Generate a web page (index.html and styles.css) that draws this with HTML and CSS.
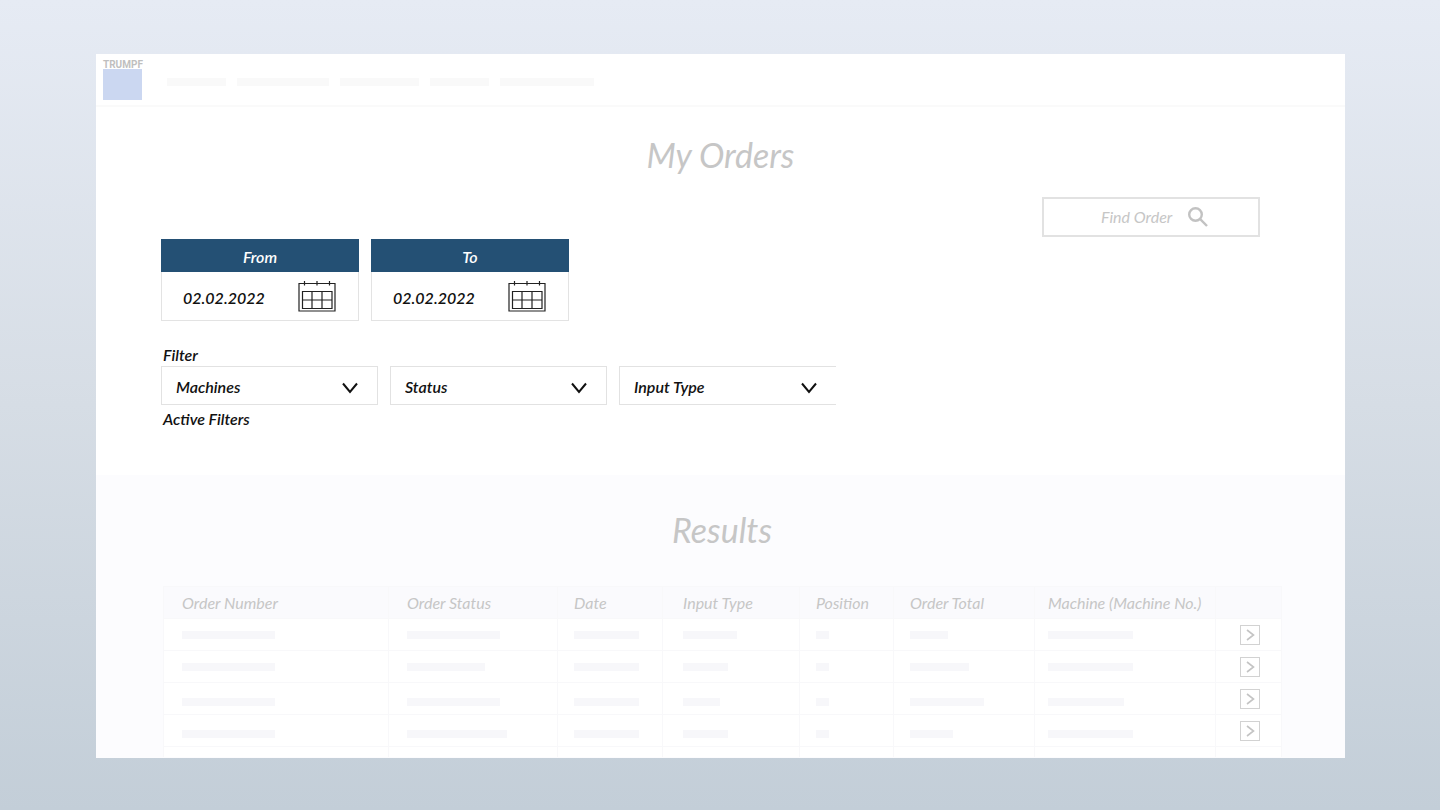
FILE: index.html
```html
<!DOCTYPE html>
<html lang="en">
<head>
<meta charset="utf-8">
<meta name="viewport" content="width=device-width, initial-scale=1">
<title>My Orders</title>
<link rel="stylesheet" href="styles.css">
</head>
<body>
<div class="panel">
  <header class="topbar">
    <div class="logo"><span class="logo-name">TRUMPF</span><span class="logo-square"></span></div>
    <nav class="nav" aria-label="Main">
      <span class="nav-item" style="width:59px"></span>
      <span class="nav-item" style="width:92px"></span>
      <span class="nav-item" style="width:79px"></span>
      <span class="nav-item" style="width:59px"></span>
      <span class="nav-item" style="width:94px"></span>
    </nav>
  </header>

  <main class="main">
    <section class="orders">
      <h1 class="title">My Orders</h1>
      <form class="search">
        <input class="search-input" type="text" placeholder="Find Order" aria-label="Find Order">
        <svg class="search-icon" viewBox="0 0 22 22" aria-hidden="true"><circle cx="8.5" cy="8.500" r="6.3"/><path d="M13.2 13.2L20 20"/></svg>
      </form>

      <div class="dates">
        <div class="date-card">
          <label class="date-label" for="from">From</label>
          <div class="date-body">
            <input class="date-input" id="from" type="text" value="02.02.2022">
            <svg class="calendar" viewBox="0 0 38 32" aria-hidden="true"><path d="M1 3.5H37V31H1ZM4.500 11.500H34V28.500H4.500ZM14 11.500V28.500M24 11.500V28.500M4.500 20H34M6.500 1V5.500M19 1V5.500M31.500 1V5.500"/></svg>
          </div>
        </div>
        <div class="date-card">
          <label class="date-label" for="to">To</label>
          <div class="date-body">
            <input class="date-input" id="to" type="text" value="02.02.2022">
            <svg class="calendar" viewBox="0 0 38 32" aria-hidden="true"><path d="M1 3.5H37V31H1ZM4.500 11.500H34V28.500H4.500ZM14 11.500V28.500M24 11.500V28.500M4.500 20H34M6.500 1V5.500M19 1V5.500M31.500 1V5.500"/></svg>
          </div>
        </div>
      </div>

      <h2 class="filter-heading">Filter</h2>
      <div class="filters">
        <div class="filter">
          <select class="filter-select" aria-label="Machines"><option>Machines</option></select>
          <svg class="chevron" viewBox="0 0 16 12" aria-hidden="true"><path d="M1 1.500L8 10L15 1.500"/></svg>
        </div>
        <div class="filter">
          <select class="filter-select" aria-label="Status"><option>Status</option></select>
          <svg class="chevron" viewBox="0 0 16 12" aria-hidden="true"><path d="M1 1.500L8 10L15 1.500"/></svg>
        </div>
        <div class="filter filter-open">
          <select class="filter-select" aria-label="Input Type"><option>Input Type</option></select>
          <svg class="chevron" viewBox="0 0 16 12" aria-hidden="true"><path d="M1 1.500L8 10L15 1.500"/></svg>
        </div>
      </div>
      <h2 class="filter-heading">Active Filters</h2>
    </section>

    <section class="results">
      <h2 class="title">Results</h2>
      <table class="table">
        <colgroup>
          <col class="c-number"><col class="c-status"><col class="c-date"><col class="c-type"><col class="c-position"><col class="c-total"><col class="c-machine"><col class="c-open">
        </colgroup>
        <thead>
          <tr><th>Order Number</th><th>Order Status</th><th>Date</th><th>Input Type</th><th>Position</th><th>Order Total</th><th>Machine (Machine No.)</th><th></th></tr>
        </thead>
        <tbody>
          <tr>
            <td><span class="bar" style="width:93px"></span></td><td><span class="bar" style="width:93px"></span></td><td><span class="bar" style="width:65px"></span></td><td><span class="bar" style="width:54px"></span></td><td><span class="bar" style="width:13px"></span></td><td><span class="bar" style="width:38px"></span></td><td><span class="bar" style="width:85px"></span></td>
            <td><button class="open" type="button" aria-label="Open order"><svg viewBox="0 0 18 18" aria-hidden="true"><path d="M6 4L12.500 9L6 14"/></svg></button></td>
          </tr>
          <tr>
            <td><span class="bar" style="width:93px"></span></td><td><span class="bar" style="width:78px"></span></td><td><span class="bar" style="width:65px"></span></td><td><span class="bar" style="width:45px"></span></td><td><span class="bar" style="width:13px"></span></td><td><span class="bar" style="width:59px"></span></td><td><span class="bar" style="width:85px"></span></td>
            <td><button class="open" type="button" aria-label="Open order"><svg viewBox="0 0 18 18" aria-hidden="true"><path d="M6 4L12.500 9L6 14"/></svg></button></td>
          </tr>
          <tr>
            <td><span class="bar" style="width:93px"></span></td><td><span class="bar" style="width:93px"></span></td><td><span class="bar" style="width:65px"></span></td><td><span class="bar" style="width:37px"></span></td><td><span class="bar" style="width:13px"></span></td><td><span class="bar" style="width:74px"></span></td><td><span class="bar" style="width:76px"></span></td>
            <td><button class="open" type="button" aria-label="Open order"><svg viewBox="0 0 18 18" aria-hidden="true"><path d="M6 4L12.500 9L6 14"/></svg></button></td>
          </tr>
          <tr>
            <td><span class="bar" style="width:93px"></span></td><td><span class="bar" style="width:100px"></span></td><td><span class="bar" style="width:65px"></span></td><td><span class="bar" style="width:45px"></span></td><td><span class="bar" style="width:13px"></span></td><td><span class="bar" style="width:43px"></span></td><td><span class="bar" style="width:85px"></span></td>
            <td><button class="open" type="button" aria-label="Open order"><svg viewBox="0 0 18 18" aria-hidden="true"><path d="M6 4L12.500 9L6 14"/></svg></button></td>
          </tr>
          <tr class="row-cut"><td></td><td></td><td></td><td></td><td></td><td></td><td></td><td></td></tr>
        </tbody>
      </table>
    </section>
  </main>
</div>
</body>
</html>
```

FILE: styles.css
```css
* { box-sizing: border-box; }

body {
  margin: 0;
  min-height: 100vh;
  padding: 54px 95px 52px 96px;
  display: flex;
  flex-direction: column;
  background: linear-gradient(#e6ebf4, #d6dde5 50%, #c3ced8);
  font-family: Lato, sans-serif;
  font-style: italic;
  font-size: 16px;
  line-height: 20px;
  color: #111;
}

input, select, button { font: inherit; color: inherit; }

.panel {
  flex: 1;
  display: flex;
  flex-direction: column;
  background: #fff;
}

.topbar {
  display: flex;
  align-items: flex-start;
  gap: 25px;
  height: 53px;
  padding: 6px 7px 0;
  border-bottom: 2px solid #fafafa;
}

.logo { display: flex; flex-direction: column; width: 39px; }

.logo-name {
  font: bold 10px/9px Roboto, sans-serif;
  color: #bfbfbf;
}

.logo-square { height: 31px; background: #cbd7f1; }

.nav { display: flex; gap: 11px; padding-top: 18px; }

.nav-item { height: 8px; background: #f9f9f9; }

.main { flex: 1; display: flex; flex-direction: column; }

.orders {
  display: flex;
  flex-direction: column;
  padding: 28px 65px 46px;
}

.title {
  margin: 0;
  text-align: center;
  font-size: 34px;
  line-height: 40px;
  font-weight: 400;
  color: #c6c6c6;
}

.search {
  align-self: flex-end;
  display: flex;
  align-items: center;
  gap: 6px;
  width: 218px;
  height: 40px;
  margin: 22px 20px 0 0;
  padding-left: 57px;
  border: 2px solid #e2e2e2;
}

.search-input {
  width: 80px;
  padding: 0;
  border: 0;
  outline: 0;
  background: none;
}

.search-input::placeholder { color: #c6c6c6; opacity: 1; }

.search-icon {
  width: 22px;
  height: 22px;
  fill: none;
  stroke: #c2c2c2;
  stroke-width: 2.4;
}

.dates { display: flex; gap: 12px; margin-top: 2px; }

.date-card { width: 198px; border: 1px solid #e3e3e3; border-top: 0; }

.date-label {
  display: block;
  margin: 0 -1px;
  padding: 8px 0 5px;
  background: #245074;
  color: #fff;
  text-align: center;
  font-weight: 600;
}

.date-body {
  display: flex;
  align-items: center;
  justify-content: space-between;
  height: 48px;
  padding: 0 22px 0 21px;
}

.date-input {
  width: 90px;
  padding: 4px 0 0;
  border: 0;
  outline: 0;
  background: none;
  font-weight: 600;
}

.calendar {
  width: 38px;
  height: 32px;
  fill: none;
  stroke: #222;
  stroke-width: 1.2;
}

.filter-heading {
  margin: 0;
  padding-left: 2px;
  font-size: 16px;
  line-height: 20px;
  font-weight: 600;
}

.dates + .filter-heading { margin-top: 24px; }

.filters { display: flex; gap: 12px; margin: 1px 0 4px; }

.filter {
  display: grid;
  align-items: center;
  width: 217px;
  height: 39px;
  border: 1px solid #e2e2e2;
}

.filter-open { border-right: 0; }

.filter-select {
  grid-area: 1 / 1;
  width: 100%;
  height: 100%;
  padding: 2px 40px 0 14px;
  border: 0;
  outline: 0;
  background: none;
  appearance: none;
  font-weight: 600;
}

.chevron {
  grid-area: 1 / 1;
  justify-self: end;
  width: 16px;
  height: 12px;
  margin: 4px 19px 0 0;
  fill: none;
  stroke: #111;
  stroke-width: 2;
  pointer-events: none;
}

.results {
  flex: 1;
  padding: 35px 64px 0 67px;
  background: #fcfcfe;
}

.table {
  width: 100%;
  margin-top: 36px;
  table-layout: fixed;
  border-collapse: collapse;
  background: #fff;
}

.c-number { width: 225px; }
.c-status { width: 169px; }
.c-date { width: 105px; }
.c-type { width: 137px; }
.c-position { width: 94px; }
.c-total { width: 141px; }
.c-machine { width: 181px; }
.c-open { width: 66px; }

.table th, .table td {
  height: 32px;
  padding: 0 0 0 18px;
  border: 1px solid #f8f8fa;
  text-align: left;
  vertical-align: middle;
  white-space: nowrap;
}

.table th {
  background: #fafafd;
  font-weight: 400;
  color: #c6c6c6;
}

.table tr > :nth-child(4) { padding-left: 20px; }
.table tr > :nth-child(3), .table tr > :nth-child(5), .table tr > :nth-child(6) { padding-left: 16px; }
.table tr > :nth-child(7) { padding-left: 13px; }
.table tr > :last-child { padding-left: 24px; }

.table tbody tr:nth-child(n+3) td:not(:last-child) { padding-top: 6px; }

.table .row-cut td { height: 10px; border-bottom: 0; }

.bar { display: block; height: 8px; background: #f7f7fa; }

.open {
  display: block;
  width: 20px;
  height: 20px;
  padding: 0;
  border: 1px solid #d2d2d2;
  background: #fff;
}

.open svg {
  display: block;
  width: 18px;
  height: 18px;
  fill: none;
  stroke: #c4c4c4;
  stroke-width: 1.6;
}
```
